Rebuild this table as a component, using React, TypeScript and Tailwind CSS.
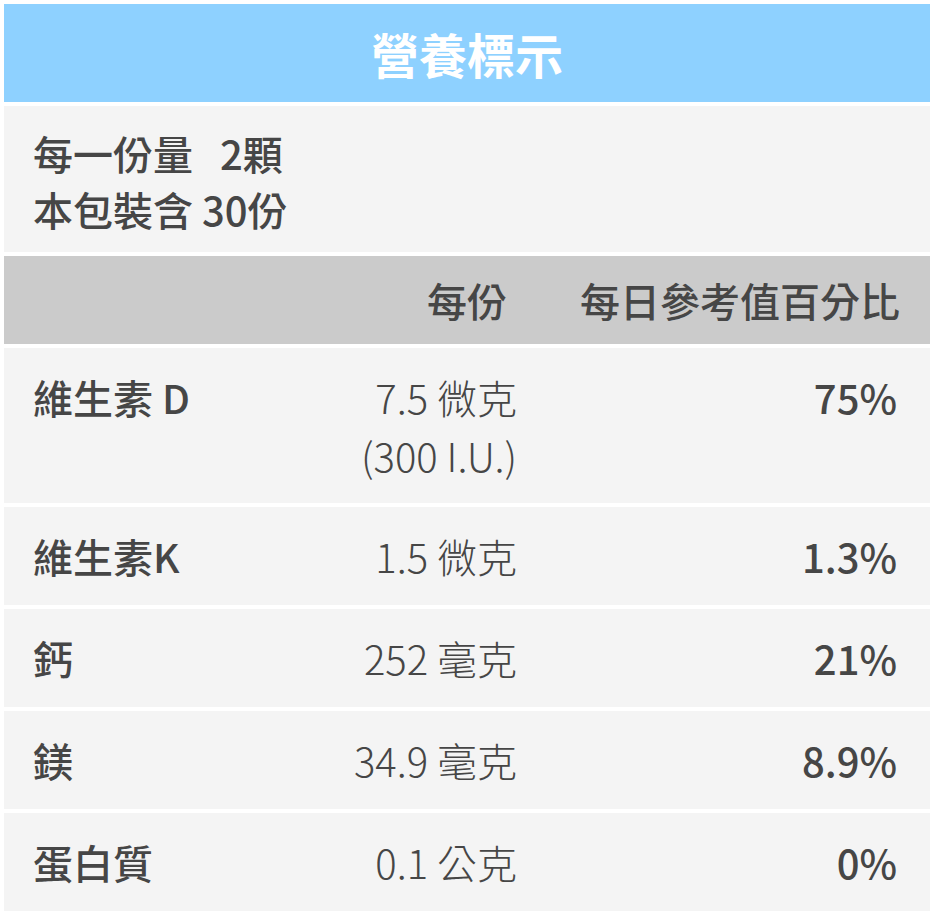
const font = {
  fontFamily: '"Noto Sans CJK TC", "Noto Sans", sans-serif',
}

const rows = [
  { name: "維生素 D", amount: ["7.5 微克", "(300 I.U.)"], dv: "75%" },
  { name: "維生素K", amount: ["1.5 微克"], dv: "1.3%" },
  { name: "鈣", amount: ["252 毫克"], dv: "21%" },
  { name: "鎂", amount: ["34.9 毫克"], dv: "8.9%" },
  { name: "蛋白質", amount: ["0.1 公克"], dv: "0%" },
]

const App = () => {
  return (
    <div className="bg-white p-1 flex flex-col gap-1 text-[#464646]" style={font}>
      {/* title */}
      <div className="bg-[#8ed1ff] h-[98px] flex items-center justify-center">
        <h1 className="text-[48px] font-bold text-white leading-none">營養標示</h1>
      </div>

      {/* serving */}
      <div className="bg-[#f4f4f4] h-[146px] flex flex-col justify-center pt-1 px-[29px] text-[40px] font-medium leading-[56px]">
        <p>每一份量&nbsp;&nbsp;&nbsp;2顆</p>
        <p>本包裝含 30份</p>
      </div>

      {/* header */}
      <div className="bg-[#cbcbcb] h-[88px] flex items-center px-[29px] text-[40px] font-medium">
        <div className="w-[250px]"></div>
        <div className="w-[234px] text-right pr-[10px]">每份</div>
        <div className="flex-1 text-right pr-[1px]">每日參考值百分比</div>
      </div>

      {/* rows */}
      {rows.map((r) => (
        <div
          key={r.name}
          className={
            r.amount.length > 1
              ? "bg-[#f4f4f4] h-[155px] flex items-start pt-[20px] px-[29px] text-[40px] leading-[58px]"
              : "bg-[#f4f4f4] h-[98px] flex items-center px-[29px] text-[40px] leading-[58px]"
          }
        >
          <div className="w-[250px] font-medium">{r.name}</div>
          <div className="w-[234px] text-right font-light">
            {r.amount.map((a) => (
              <p key={a}>{a}</p>
            ))}
          </div>
          <div className="flex-1 text-right font-medium pr-[4px]">{r.dv}</div>
        </div>
      ))}
    </div>
  )
}

export default App
